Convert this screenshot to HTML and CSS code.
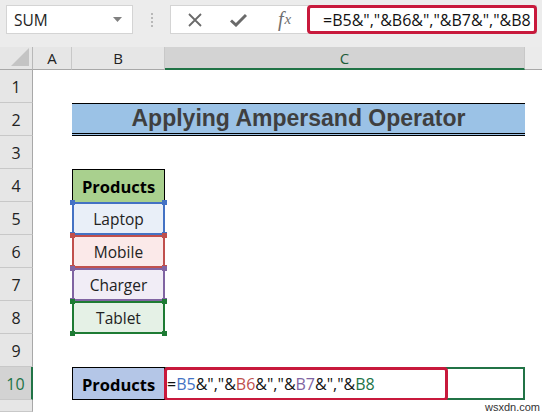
FILE: index.html
```html
<!DOCTYPE html>
<html>
<head>
<meta charset="utf-8">
<link rel="stylesheet" href="styles.css">
</head>
<body>
<div class="app">
  <div class="toolbar">
    <div class="namebox">
      <span class="nb-text">SUM</span>
      <svg class="nb-arrow" width="9" height="5" viewBox="0 0 9 5"><path d="M0 0 L9 0 L4.5 5 Z" fill="#808080"/></svg>
    </div>
    <div class="dots">
      <svg width="4" height="14" viewBox="0 0 4 14"><rect x="1" y="0" width="2" height="2" fill="#b8b8b8"/><rect x="1" y="4" width="2" height="2" fill="#b8b8b8"/><rect x="1" y="8" width="2" height="2" fill="#b8b8b8"/><rect x="1" y="12" width="2" height="2" fill="#b8b8b8"/></svg>
    </div>
    <div class="fbox">
      <div class="fbtn">
        <svg width="14" height="14" viewBox="0 0 14 14"><path d="M1 1 L13 13 M13 1 L1 13" stroke="#6a6a6a" stroke-width="1.8"/></svg>
      </div>
      <div class="fbtn">
        <svg width="17" height="14" viewBox="0 0 17 14"><path d="M1 7.5 L6 12 L16 2" stroke="#6a6a6a" stroke-width="3" fill="none"/></svg>
      </div>
      <div class="fbtn fx"><i>f</i><i class="x">x</i></div>
      <div class="finput">=B5&amp;","&amp;B6&amp;","&amp;B7&amp;","&amp;B8</div>
    </div>
  </div>

  <div class="sheet">
    <div class="corner"><svg width="18" height="18" viewBox="0 0 18 18"><path d="M18 0 L18 18 L0 18 Z" fill="#c4c4c4"/></svg></div>
    <div class="colhead">A</div>
    <div class="colhead">B</div>
    <div class="colhead sel">C</div>
    <div class="colhead rest"></div>

    <div class="rowhead">1</div><div class="cell"></div><div class="cell"></div><div class="cell"></div><div class="cell"></div>

    <div class="rowhead">2</div><div class="cell"></div><div class="title">Applying Ampersand Operator</div><div class="cell"></div>

    <div class="rowhead">3</div><div class="cell"></div><div class="cell"></div><div class="cell"></div><div class="cell"></div>

    <div class="rowhead">4</div><div class="cell"></div><div class="hdr">Products</div><div class="cell"></div><div class="cell"></div>

    <div class="rowhead">5</div><div class="cell"></div>
    <div class="ref blue">Laptop<span class="h tl"></span><span class="h tr"></span><span class="h bl"></span><span class="h br"></span></div>
    <div class="cell"></div><div class="cell"></div>

    <div class="rowhead">6</div><div class="cell"></div>
    <div class="ref red">Mobile<span class="h tl"></span><span class="h tr"></span><span class="h bl"></span><span class="h br"></span></div>
    <div class="cell"></div><div class="cell"></div>

    <div class="rowhead">7</div><div class="cell"></div>
    <div class="ref purple">Charger<span class="h tl"></span><span class="h tr"></span><span class="h bl"></span><span class="h br"></span></div>
    <div class="cell"></div><div class="cell"></div>

    <div class="rowhead">8</div><div class="cell"></div>
    <div class="ref green">Tablet<span class="h tl"></span><span class="h tr"></span><span class="h bl"></span><span class="h br"></span></div>
    <div class="cell"></div><div class="cell"></div>

    <div class="rowhead">9</div><div class="cell"></div><div class="cell"></div><div class="cell"></div><div class="cell"></div>

    <div class="rowhead sel">10</div><div class="cell"></div><div class="out">Products</div>
    <div class="active"><span class="formula">=<b class="c1">B5</b>&amp;","&amp;<b class="c2">B6</b>&amp;","&amp;<b class="c3">B7</b>&amp;","&amp;<b class="c4">B8</b></span><span class="annot"></span></div>
    <div class="cell"></div>

    <div class="rowhead"></div><div class="cell"></div><div class="cell"></div><div class="cell"></div><div class="cell"><span class="wm">wsxdn.com</span></div>
  </div>
</div>
</body>
</html>
```

FILE: styles.css
```css
html, body {
  margin: 0;
  padding: 0;
}
body {
  width: 542px;
  height: 412px;
  overflow: hidden;
  background: #ffffff;
  font-family: "Open Sans", "Noto Sans", sans-serif;
}
.app {
  width: 542px;
  height: 412px;
  display: flex;
  flex-direction: column;
}
.toolbar {
  height: 47px;
  background: #ececec;
  display: flex;
  align-items: flex-start;
  padding-top: 5px;
  box-sizing: border-box;
}
.namebox {
  margin-left: 6px;
  width: 127px;
  height: 29px;
  box-sizing: border-box;
  background: #fff;
  border: 1px solid #d4d4d4;
  display: flex;
  align-items: center;
  padding-left: 7px;
  padding-right: 10px;
}
.nb-text {
  flex: 1;
  font-size: 15.5px;
  color: #222;
}
.dots {
  width: 37px;
  height: 29px;
  display: flex;
  align-items: center;
  justify-content: center;
}
.fbox {
  width: 367px;
  height: 29px;
  box-sizing: border-box;
  background: #fff;
  border: 1px solid #d4d4d4;
  display: flex;
  align-items: center;
  padding-left: 17px;
}
.fbtn {
  width: 42px;
  display: flex;
  align-items: center;
  justify-content: flex-start;
}
.fbtn.fx {
  width: 29px;
  padding-left: 6px;
  font-family: "Liberation Serif", "DejaVu Serif", serif;
  font-size: 20px;
  color: #707070;
}
.fbtn.fx .x {
  font-size: 15px;
  margin-left: 1px;
}
.finput {
  flex: 1;
  height: 29px;
  box-sizing: border-box;
  border: 3px solid #c8193c;
  border-radius: 4px;
  margin-right: -1px;
  font-size: 16px;
  color: #111;
  display: flex;
  align-items: center;
  padding-left: 13px;
  white-space: nowrap;
  overflow: hidden;
}

.sheet {
  display: grid;
  grid-template-columns: 33px 39px 93px 360px 17px;
  grid-template-rows: 23px repeat(10, 33px) 12px;
  font-family: "Open Sans", "Noto Sans", sans-serif;
}
.corner {
  background: #e6e6e6;
  border-right: 1px solid #b8b8b8;
  border-bottom: 1px solid #a8a8a8;
  box-sizing: border-box;
  display: flex;
  align-items: flex-end;
  justify-content: flex-end;
  padding: 0 3px 3px 0;
}
.colhead {
  background: #e6e6e6;
  border-right: 1px solid #c8c8c8;
  border-bottom: 1px solid #a8a8a8;
  box-sizing: border-box;
  display: flex;
  align-items: center;
  justify-content: center;
  font-size: 15px;
  color: #222;
}
.colhead.sel {
  background: #d3d3d3;
  border-bottom: 2px solid #217346;
  color: #1d5c38;
}
.colhead.rest {
  background: #ebebeb;
  border-right: none;
}
.rowhead {
  background: #e6e6e6;
  border-right: 1px solid #a8a8a8;
  border-bottom: 1px solid #c8c8c8;
  box-sizing: border-box;
  display: flex;
  align-items: center;
  justify-content: center;
  font-size: 16px;
  color: #222;
  padding-top: 2px;
}
.rowhead.sel {
  background: #d3d3d3;
  border-right: 2px solid #217346;
  color: #217346;
}
.cell {
  background: #fff;
  position: relative;
}
.title {
  grid-column: span 2;
  background: #9bc2e6;
  border-top: 1px solid #000;
  border-bottom: 3px double #000;
  box-sizing: border-box;
  display: flex;
  align-items: center;
  justify-content: center;
  font-family: "Liberation Sans", Arial, sans-serif;
  font-weight: bold;
  font-size: 23px;
  color: #3f3f3f;
}
.hdr {
  background: #a9d08e;
  border: 1px solid #000;
  border-bottom: none;
  box-sizing: border-box;
  display: flex;
  align-items: center;
  justify-content: center;
  font-weight: bold;
  font-size: 16.5px;
  color: #000;
  padding-top: 1px;
}
.ref {
  position: relative;
  box-sizing: border-box;
  border: 2px solid;
  display: flex;
  align-items: center;
  justify-content: center;
  font-size: 15.5px;
  color: #222;
}
.ref.blue { border-color: #4472c4; background: #e9eff8; }
.ref.red { border-color: #c0504d; background: #fbe9e9; }
.ref.purple { border-color: #8064a2; background: #f1edf6; }
.ref.green { border-color: #1e7b34; background: #e5f1e6; }
.h {
  position: absolute;
  width: 5px;
  height: 5px;
  z-index: 2;
}
.blue .h { background: #4472c4; }
.red .h { background: #c0504d; }
.purple .h { background: #8064a2; }
.green .h { background: #1e7b34; }
.h.tl { left: -4px; top: -4px; }
.h.tr { right: -4px; top: -4px; }
.h.bl { left: -4px; bottom: -4px; }
.h.br { right: -4px; bottom: -4px; }
.out {
  background: #b4c6e7;
  border: 1px solid #000;
  box-sizing: border-box;
  display: flex;
  align-items: center;
  justify-content: center;
  font-weight: bold;
  font-size: 16.5px;
  color: #000;
  padding-top: 1px;
}
.active {
  position: relative;
  border: 2px solid #217346;
  box-sizing: border-box;
  display: flex;
  align-items: center;
  padding-left: 0;
  font-size: 16px;
  color: #111;
  white-space: nowrap;
}
.formula b {
  font-weight: normal;
}
.c1 { color: #4472c4; }
.c2 { color: #c0504d; }
.c3 { color: #8064a2; }
.c4 { color: #217346; }
.annot {
  position: absolute;
  left: -3px;
  top: -2px;
  width: 284px;
  height: 34px;
  box-sizing: border-box;
  border: 3px solid #c8193c;
  border-radius: 4px;
}
.wm {
  position: absolute;
  right: 2px;
  bottom: -1px;
  font-family: "Liberation Sans", Arial, sans-serif;
  font-size: 11px;
  color: #333;
  white-space: nowrap;
}
```
